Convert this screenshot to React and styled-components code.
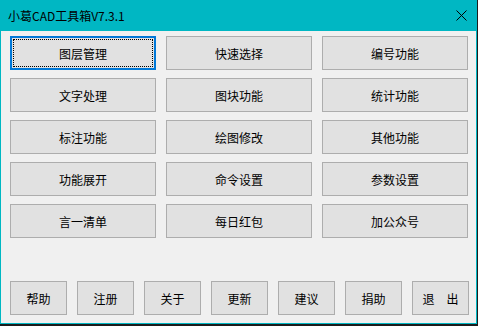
import React from 'react'
import styled, { createGlobalStyle } from 'styled-components'

const teal = '#00b7c3'

const GlobalStyle = createGlobalStyle`
  html, body {
    margin: 0;
    padding: 0;
    background: #1c1c1c;
  }
  body {
    font-family: "Noto Sans CJK SC", "Noto Sans", sans-serif;
  }
`

const Window = styled.div`
  width: 477px;
  height: 324px;
  box-sizing: border-box;
  border: 1px solid ${teal};
  border-top: none;
  background: #f0f0f0;
  display: flex;
  flex-direction: column;
`

const TitleBar = styled.div`
  height: 31px;
  flex: none;
  background: ${teal};
  display: flex;
  align-items: center;
  justify-content: space-between;
  padding: 0 0 0 7px;
  font-size: 12px;
  color: #000;
`

const CloseButton = styled.div`
  width: 46px;
  height: 31px;
  display: flex;
  align-items: center;
  justify-content: center;
  margin-right: -8px;
`

const Body = styled.div`
  flex: 1;
  display: flex;
  flex-direction: column;
  justify-content: space-between;
  padding: 5px 0 8px 9px;
`

const Grid = styled.div`
  display: grid;
  grid-template-columns: repeat(3, 146px);
  grid-auto-rows: 34px;
  column-gap: 10px;
  row-gap: 8px;
`

const Footer = styled.div`
  display: flex;
  gap: 10px;
`

const Button = styled.div`
  position: relative;
  box-sizing: border-box;
  width: ${p => p.$w || 146}px;
  height: ${p => p.$h || 34}px;
  background: #e1e1e1;
  border: ${p => (p.$focus ? `2px solid #0078d7` : `1px solid #adadad`)};
  display: flex;
  align-items: center;
  justify-content: center;
  font-size: 12px;
  color: #000;
  white-space: pre;

  &::after {
    content: '';
    display: ${p => (p.$focus ? 'block' : 'none')};
    position: absolute;
    inset: 1px;
    border: 1px dotted #000;
  }
`

const mainButtons = [
  '图层管理', '快速选择', '编号功能',
  '文字处理', '图块功能', '统计功能',
  '标注功能', '绘图修改', '其他功能',
  '功能展开', '命令设置', '参数设置',
  '言一清单', '每日红包', '加公众号',
]

const footerButtons = ['帮助', '注册', '关于', '更新', '建议', '捐助', '退\u3000出']

export default function App() {
  return (
    <>
      <GlobalStyle />
      <Window>
        <TitleBar>
          <span>小葛CAD工具箱V7.3.1</span>
          <CloseButton>
            <svg width="11" height="11" viewBox="0 0 11 11">
              <path d="M0.5 0.5 L10.5 10.5 M10.5 0.5 L0.5 10.5" stroke="#000" strokeWidth="1" />
            </svg>
          </CloseButton>
        </TitleBar>
        <Body>
          <Grid>
            {mainButtons.map((label, i) => (
              <Button key={label} $focus={i === 0}>{label}</Button>
            ))}
          </Grid>
          <Footer>
            {footerButtons.map(label => (
              <Button key={label} $w={57} $h={34}>{label}</Button>
            ))}
          </Footer>
        </Body>
      </Window>
    </>
  )
}
